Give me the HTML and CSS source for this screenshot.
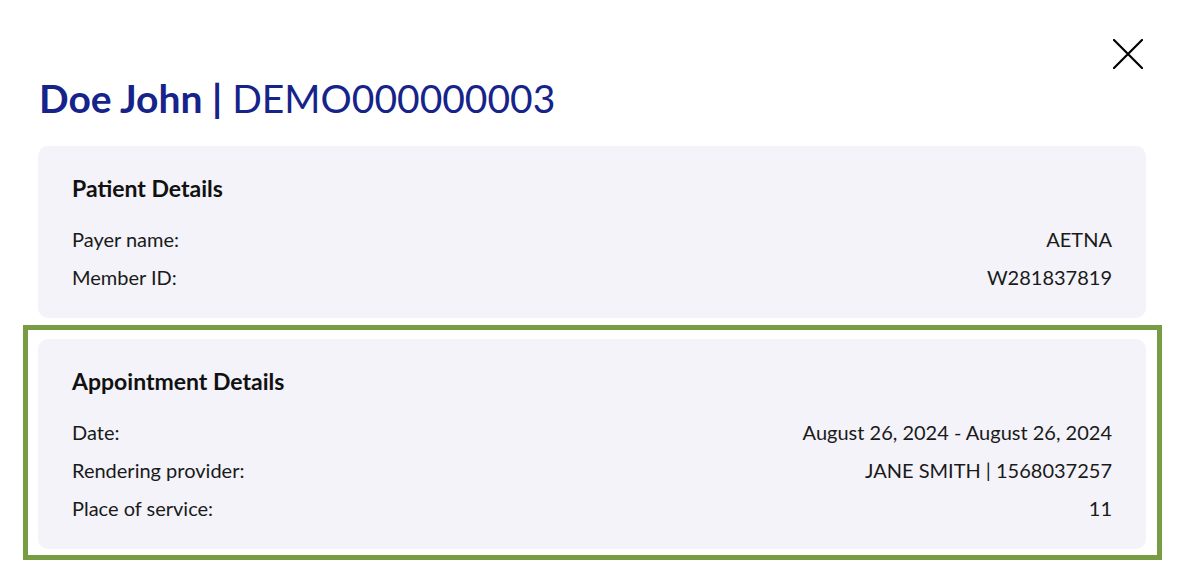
FILE: index.html
```html
<!DOCTYPE html>
<html lang="en">
<head>
<meta charset="utf-8">
<title>Doe John | DEMO000000003</title>
<link rel="stylesheet" href="styles.css">
</head>
<body>
<div class="modal">
  <div class="topbar">
    <button class="close" aria-label="Close">
      <svg width="30" height="30" viewBox="0 0 30 30" aria-hidden="true">
        <path d="M1 1 L29 29 M29 1 L1 29" stroke="#000" stroke-width="2.2" stroke-linecap="round" fill="none"/>
      </svg>
    </button>
  </div>
  <h1 class="title"><span class="title-name">Doe John |</span> <span class="title-id">DEMO000000003</span></h1>

  <section class="card">
    <h2 class="card-title">Patient Details</h2>
    <div class="rows">
      <div class="row"><span class="label">Payer name:</span><span class="value">AETNA</span></div>
      <div class="row"><span class="label">Member ID:</span><span class="value">W281837819</span></div>
    </div>
  </section>

  <div class="highlight">
    <section class="card">
      <h2 class="card-title">Appointment Details</h2>
      <div class="rows">
        <div class="row"><span class="label">Date:</span><span class="value">August 26, 2024 - August 26, 2024</span></div>
        <div class="row"><span class="label">Rendering provider:</span><span class="value">JANE SMITH | 1568037257</span></div>
        <div class="row"><span class="label">Place of service:</span><span class="value">11</span></div>
      </div>
    </section>
  </div>
</div>
</body>
</html>
```

FILE: styles.css
```css
html, body {
  margin: 0;
  padding: 0;
  background: #ffffff;
}

body {
  font-family: Lato, "Noto Sans", sans-serif;
  color: #111111;
}

.modal {
  padding: 39px 44px 0 38px;
}

.topbar {
  display: flex;
  justify-content: flex-end;
  padding-right: 3px;
}

.close {
  display: block;
  width: 30px;
  height: 30px;
  padding: 0;
  margin: 0;
  border: 0;
  background: transparent;
  cursor: pointer;
}

.close svg {
  display: block;
}

.title {
  margin: 6px 0 25px 1px;
  font-size: 39px;
  line-height: 46px;
  color: #16238a;
  font-weight: 400;
  white-space: nowrap;
}

.title-name {
  font-weight: 700;
}

.card {
  background: #f3f3f9;
  border-radius: 10px;
  padding: 28px 34px 29px 34px;
}

.card-title {
  margin: 0 0 25px 0;
  font-size: 23px;
  line-height: 28px;
  font-weight: 700;
  color: #111111;
}

.rows {
  display: flex;
  flex-direction: column;
  gap: 14px;
}

.row {
  display: flex;
  justify-content: space-between;
  font-size: 20px;
  line-height: 24px;
  color: #1a1a1a;
}

.highlight {
  margin: 7px -16px 0 -15px;
  border: 5px solid #779c43;
  padding: 9px 11px 6px 10px;
}
```
